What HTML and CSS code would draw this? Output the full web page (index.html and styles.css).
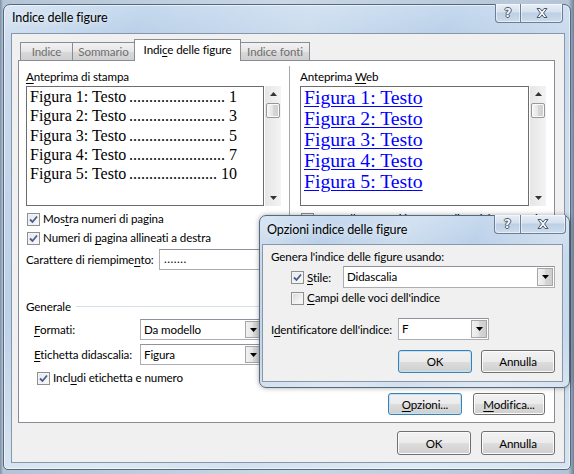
FILE: index.html
```html
<!DOCTYPE html>
<html lang="it">
<head>
<meta charset="utf-8">
<title>Indice delle figure</title>
<link rel="stylesheet" href="styles.css">
</head>
<body>
<div class="desktop">
  <div class="window main">
    <div class="titlebar">
      <span class="title">Indice delle figure</span>
      <div class="caps">
        <span class="cap help">?</span>
        <span class="cap close"><svg width="12" height="10" viewBox="0 0 12 10"><path d="M1 0.5h3l2 2.6 2-2.6h3l-3.4 4.5 3.4 4.5h-3l-2-2.6-2 2.6h-3l3.4-4.5z" fill="#f4f6f8" stroke="#4d5966" stroke-width="1"/></svg></span>
      </div>
    </div>
    <div class="client">
      <div class="tabs">
        <div class="tab t1">Indice</div>
        <div class="tab t2">Sommario</div>
        <div class="tab t3 active">Indi<u>c</u>e delle figure</div>
        <div class="tab t4">Indice fonti</div>
      </div>
      <div class="panel">
        <div class="previews">
          <div class="col colleft">
            <div class="lbl"><u>A</u>nteprima di stampa</div>
            <div class="pwrap">
              <div class="preview print">
                <div class="pline"><span class="pname">Figura 1: Testo</span><span class="leader">........................</span><span class="pnum">1</span></div>
                <div class="pline"><span class="pname">Figura 2: Testo</span><span class="leader">........................</span><span class="pnum">3</span></div>
                <div class="pline"><span class="pname">Figura 3: Testo</span><span class="leader">........................</span><span class="pnum">5</span></div>
                <div class="pline"><span class="pname">Figura 4: Testo</span><span class="leader">........................</span><span class="pnum">7</span></div>
                <div class="pline"><span class="pname">Figura 5: Testo</span><span class="leader">......................</span><span class="pnum">10</span></div>
              </div>
              <div class="vscroll">
                <svg class="arr" width="7" height="4" viewBox="0 0 7 4"><path d="M0 4L3.5 0 7 4z" fill="#333"/></svg>
                <div class="thumb"></div>
                <div class="spacer"></div>
                <svg class="arr" width="7" height="4" viewBox="0 0 7 4"><path d="M0 0L3.5 4 7 0z" fill="#333"/></svg>
              </div>
            </div>
            <div class="chk row1"><span class="box on"><svg width="11" height="11" viewBox="0 0 11 11"><path d="M2 5.5L4.5 8 9 2.5" fill="none" stroke="#4a5d8c" stroke-width="1.8"/></svg></span><span class="ctxt">Mos<u>t</u>ra numeri di pagina</span></div>
            <div class="chk row2"><span class="box on"><svg width="11" height="11" viewBox="0 0 11 11"><path d="M2 5.5L4.5 8 9 2.5" fill="none" stroke="#4a5d8c" stroke-width="1.8"/></svg></span><span class="ctxt">Numeri di <u>p</u>agina allineati a destra</span></div>
            <div class="fillrow"><span class="flab">Carattere di riempime<u>n</u>to:</span><div class="field">.......</div></div>
          </div>
          <div class="sep"></div>
          <div class="col colright">
            <div class="lbl">Anteprima <u>W</u>eb</div>
            <div class="pwrap">
              <div class="preview web">
                <div class="wline">Figura 1: Testo</div>
                <div class="wline">Figura 2: Testo</div>
                <div class="wline">Figura 3: Testo</div>
                <div class="wline">Figura 4: Testo</div>
                <div class="wline">Figura 5: Testo</div>
              </div>
              <div class="vscroll">
                <svg class="arr" width="7" height="4" viewBox="0 0 7 4"><path d="M0 4L3.5 0 7 4z" fill="#333"/></svg>
                <div class="thumb"></div>
                <div class="spacer"></div>
                <svg class="arr" width="7" height="4" viewBox="0 0 7 4"><path d="M0 0L3.5 4 7 0z" fill="#333"/></svg>
              </div>
            </div>
            <div class="chk row1"><span class="box on"><svg width="11" height="11" viewBox="0 0 11 11"><path d="M2 5.5L4.5 8 9 2.5" fill="none" stroke="#4a5d8c" stroke-width="1.8"/></svg></span><span class="ctxt"><u>U</u>sa collegamenti ipertestuali anziché numeri</span></div>
          </div>
        </div>
        <div class="group"><span>Generale</span><span class="gline"></span></div>
        <div class="formrow r1"><span class="glab"><u>F</u>ormati:</span><div class="combo wide"><span class="ctext">Da modello</span><span class="cbtn"><svg width="7" height="4" viewBox="0 0 7 4"><path d="M0 0L3.5 4 7 0z" fill="#000"/></svg></span></div></div>
        <div class="formrow r2"><span class="glab"><u>E</u>tichetta didascalia:</span><div class="combo wide"><span class="ctext">Figura</span><span class="cbtn"><svg width="7" height="4" viewBox="0 0 7 4"><path d="M0 0L3.5 4 7 0z" fill="#000"/></svg></span></div></div>
        <div class="chk incl"><span class="box on"><svg width="11" height="11" viewBox="0 0 11 11"><path d="M2 5.5L4.5 8 9 2.5" fill="none" stroke="#4a5d8c" stroke-width="1.8"/></svg></span><span class="ctxt">Incl<u>u</u>di etichetta e numero</span></div>
        <div class="pbuttons">
          <span class="btn focus opz"><span><u>O</u>pzioni...</span></span>
          <span class="btn mod"><span><u>M</u>odifica...</span></span>
        </div>
      </div>
      <div class="footer">
        <span class="btn big">OK</span>
        <span class="btn big">Annulla</span>
      </div>
    </div>
  </div>

  <div class="window dialog">
    <div class="titlebar">
      <span class="title">Opzioni indice delle figure</span>
      <div class="caps">
        <span class="cap help">?</span>
        <span class="cap close dclose"><svg width="12" height="10" viewBox="0 0 12 10"><path d="M1 0.5h3l2 2.6 2-2.6h3l-3.4 4.5 3.4 4.5h-3l-2-2.6-2 2.6h-3l3.4-4.5z" fill="#f4f6f8" stroke="#4d5966" stroke-width="1"/></svg></span>
      </div>
    </div>
    <div class="client dclient">
      <div class="dhead">Genera l'indice delle figure usando:</div>
      <div class="stilerow">
        <span class="box on"><svg width="11" height="11" viewBox="0 0 11 11"><path d="M2 5.5L4.5 8 9 2.5" fill="none" stroke="#4a5d8c" stroke-width="1.8"/></svg></span>
        <span class="slab"><u>S</u>tile:</span>
        <div class="combo stile"><span class="ctext">Didascalia</span><span class="cbtn"><svg width="7" height="4" viewBox="0 0 7 4"><path d="M0 0L3.5 4 7 0z" fill="#000"/></svg></span></div>
      </div>
      <div class="chk campi"><span class="box"></span><span class="ctxt"><u>C</u>ampi delle voci dell'indice</span></div>
      <div class="idrow">
        <span class="idlab">I<u>d</u>entificatore dell'indice:</span>
        <div class="combo idc"><span class="ctext">F</span><span class="cbtn"><svg width="7" height="4" viewBox="0 0 7 4"><path d="M0 0L3.5 4 7 0z" fill="#000"/></svg></span></div>
      </div>
      <div class="dbuttons">
        <span class="btn big focus">OK</span>
        <span class="btn big">Annulla</span>
      </div>
    </div>
  </div>
</div>
</body>
</html>
```

FILE: styles.css
```css
* { box-sizing: border-box; }
html, body { margin: 0; padding: 0; }
body {
  font-family: Lato, "Noto Sans", "Liberation Sans", sans-serif;
  font-size: 11.6px;
  letter-spacing: -0.12px;
  color: #000;
}
u { text-decoration: underline; text-underline-offset: 2px; }

.desktop {
  position: relative;
  width: 574px;
  height: 474px;
  overflow: hidden;
  padding-top: 4px;
  padding-left: 3px;
  background: linear-gradient(90deg, #7d8fa3 0, #b4c4d6 3px, #c9d7e6 50%, #b4c4d6 99%, #6f8196 100%);
}

/* Aero glass window frame */
.window {
  display: flex;
  flex-direction: column;
  border: 1px solid #56687d;
  border-radius: 7px 7px 5px 5px;
  background:
    linear-gradient(115deg, rgba(255,255,255,0.35) 0, rgba(255,255,255,0) 18%, rgba(255,255,255,0.25) 40%, rgba(255,255,255,0) 58%, rgba(255,255,255,0.3) 80%, rgba(255,255,255,0.1) 100%),
    linear-gradient(#c6d9ee, #b6cde6 40px, #bdd2e9 70%, #d3e1ef);
  box-shadow: inset 0 0 0 1px rgba(255,255,255,0.55);
}
.main {
  width: 568px;
  height: 466px;
}
.titlebar {
  display: flex;
  justify-content: space-between;
  align-items: flex-start;
  height: 28px;
  flex: none;
}
.title {
  padding: 4px 0 0 8px;
  line-height: 17px;
  font-size: 12.6px;
  color: #000;
  text-shadow: 0 0 6px rgba(255,255,255,0.9);
}
.caps {
  display: flex;
  margin-top: -1px;
  margin-right: 7px;
}
.cap {
  display: flex;
  align-items: center;
  justify-content: center;
  height: 19px;
  border: 1px solid #6d7e92;
  border-top: none;
  background: linear-gradient(#e8eff7, #d3e0ee 45%, #bccfe4 50%, #cddcec);
  box-shadow: inset 0 0 0 1px rgba(255,255,255,0.5);
}
.help {
  width: 26px;
  border-radius: 0 0 0 4px;
  font-family: "DejaVu Sans", sans-serif;
  font-weight: bold;
  font-size: 12px;
  letter-spacing: 0;
  color: #f7f8fa;
  text-shadow: 1px 0 0 #4d5966, -1px 0 0 #4d5966, 0 1px 0 #4d5966, 0 -1px 0 #4d5966;
}
.close {
  width: 42px;
  border-left: none;
  border-radius: 0 0 4px 0;
}

.client {
  flex: 1;
  margin: 0 5px 6px 7px;
  border: 1px solid #8796a8;
  background: #f0f0f0;
  padding: 5px 9px 7px 6px;
  display: flex;
  flex-direction: column;
}

/* tabs */
.tabs {
  display: flex;
  align-items: flex-end;
  height: 21px;
  padding-left: 2px;
  position: relative;
  z-index: 2;
}
.tab {
  height: 18px;
  border: 1px solid #898c95;
  border-bottom: none;
  background: linear-gradient(#f2f2f2, #e6e6e6 50%, #d9d9d9 50%, #d0d0d0);
  color: #6f6f6f;
  text-align: center;
  line-height: 17px;
  margin-left: -1px;
}
.t1 { width: 53px; margin-left: 0; }
.t2 { width: 63px; }
.t3 { width: 107px; }
.t4 { width: 70px; }
.tab.active {
  height: 22px;
  margin-bottom: -1px;
  background: #fff;
  color: #000;
  line-height: 20px;
  position: relative;
  z-index: 3;
}

.panel {
  height: 363px;
  border: 1px solid #898c95;
  background: #fff;
  position: relative;
  z-index: 1;
  overflow: hidden;
}

/* previews */
.previews {
  display: flex;
  padding: 9px 0 0 7px;
}
.col { display: flex; flex-direction: column; }
.colleft { width: 255px; }
.colright { width: 246px; overflow: hidden; }
.sep {
  width: 1px;
  background: #a8a8a8;
  margin: -4px 10px 0 8px;
}
.lbl { line-height: 14px; height: 14px; }
.pwrap {
  display: flex;
  margin-top: 2px;
  height: 120px;
}
.preview {
  border: 1px solid #6d6d6d;
  background: #fff;
  overflow: hidden;
  font-family: "Liberation Serif", "Times New Roman", serif;
  letter-spacing: 0;
}
.print {
  width: 238px;
  padding: 0 0 0 3px;
  font-size: 16px;
  line-height: 19.25px;
}
.pline {
  display: flex;
  justify-content: space-between;
  width: 207px;
  white-space: nowrap;
}
.pname, .pnum, .leader { flex: none; }
.leader {
  margin-left: auto;
  padding-right: 4px;
}
.web {
  width: 230px;
  padding-left: 3px;
  font-size: 19.7px;
  line-height: 21px;
}
.wline {
  color: #0000ff;
  text-decoration: underline;
  text-underline-offset: 2px;
  white-space: nowrap;
}
.vscroll {
  width: 16px;
  margin-left: 1px;
  background: linear-gradient(90deg, #e6e6e6, #f3f3f3);
  display: flex;
  flex-direction: column;
  align-items: center;
  padding: 6px 0 6px;
}
.arr { flex: none; }
.thumb {
  width: 14px;
  height: 15px;
  margin-top: 7px;
  border: 1px solid #979797;
  border-radius: 2px;
  background: linear-gradient(90deg, #f5f5f5, #e4e4e4 50%, #d6d6d6 51%, #cfcfcf);
  box-shadow: inset 0 0 0 1px #fafafa;
}
.spacer { flex: 1; }

/* checkboxes */
.chk {
  display: flex;
  align-items: center;
  height: 14px;
  line-height: 14px;
  white-space: nowrap;
}
.ctxt { white-space: nowrap; }
.box {
  flex: none;
  width: 13px;
  height: 13px;
  border: 1px solid #8e8f8f;
  background: linear-gradient(135deg, #d7d7d7, #f4f4f4 70%, #fbfbfb);
  box-shadow: inset 0 0 0 1px #f3f3f3;
  margin-right: 3px;
  display: flex;
  align-items: center;
  justify-content: center;
}
.box.on { background: linear-gradient(135deg, #e5e8ef, #f8f9fb); }
.colleft .chk .box, .colright .chk .box { margin-left: 1px; }
.row1 { margin-top: 6px; }
.row2 { margin-top: 5px; }

.fillrow {
  display: flex;
  align-items: center;
  margin-top: 4px;
}
.flab { width: 133px; white-space: nowrap; }
.field {
  width: 104px;
  height: 21px;
  border: 1px solid #abadb3;
  border-top-color: #8e929c;
  background: #fff;
  padding-left: 4px;
  line-height: 18px;
  letter-spacing: 0.5px;
}

/* Generale */
.group {
  display: flex;
  align-items: center;
  margin: 29px 9px 0 7px;
  height: 14px;
}
.gline {
  flex: 1;
  height: 1px;
  background: #d5dfe5;
  margin-left: 5px;
}
.formrow {
  display: flex;
  align-items: center;
  padding-left: 15px;
}
.r1 { margin-top: 6px; }
.r2 { margin-top: 4px; }
.glab { width: 106px; white-space: nowrap; }

.combo {
  display: flex;
  height: 21px;
  border: 1px solid #abadb3;
  border-top-color: #8e929c;
  background: #fff;
}
.combo .ctext {
  flex: 1;
  padding-left: 3px;
  line-height: 19px;
  white-space: nowrap;
}
.cbtn {
  width: 16px;
  margin: 1px;
  border: 1px solid #a6a6a6;
  background: linear-gradient(90deg, #f2f2f2, #e4e4e4 50%, #d7d7d7 51%, #cdcdcd);
  display: flex;
  align-items: center;
  justify-content: center;
}
.wide { width: 123px; }

.incl { margin-top: 6px; padding-left: 18px; }

.pbuttons {
  display: flex;
  justify-content: flex-end;
  gap: 11px;
  margin-top: 8px;
  padding-right: 9px;
}

/* buttons */
.btn {
  display: flex;
  align-items: center;
  justify-content: center;
  height: 22px;
  border: 1px solid #707070;
  border-radius: 3px;
  background: linear-gradient(#f2f2f2, #ebebeb 50%, #dddddd 51%, #cfcfcf);
  box-shadow: inset 0 0 0 1px #fbfbfb;
  white-space: nowrap;
}
.btn.focus {
  border-color: #3c7fb1;
  box-shadow: inset 0 0 0 1px #c2e2f5;
}
.opz { width: 74px; }
.mod { width: 72px; }
.big { width: 74px; height: 24px; }

.footer {
  display: flex;
  justify-content: flex-end;
  gap: 10px;
  margin-top: 8px;
}

/* options dialog (floating window) */
.dialog {
  position: absolute;
  left: 259px;
  top: 215px;
  width: 311px;
  height: 173px;
  border-radius: 7px;
  box-shadow: 0 0 5px rgba(0,0,0,0.35);
  z-index: 10;
}
.dialog .title { padding-left: 7px; padding-top: 5px; }
.dialog .caps { margin-right: 3px; }
.dialog .help { width: 27px; }
.dclose { width: 45px; }
.dclient {
  margin: 0 6px 5px 2px;
  padding: 5px 7px 8px 8px;
  display: block;
}
.dhead { line-height: 14px; height: 14px; }
.stilerow {
  display: flex;
  align-items: center;
  margin-top: 2px;
  padding-left: 20px;
}
.stilerow .box { margin-right: 3px; }
.slab { width: 36px; }
.stile { width: 212px; height: 22px; }
.campi { margin-top: 3px; padding-left: 20px; }
.idrow {
  display: flex;
  align-items: center;
  margin-top: 13px;
}
.idlab { width: 127px; white-space: nowrap; }
.idc { width: 91px; height: 22px; }
.dbuttons {
  display: flex;
  justify-content: flex-end;
  gap: 9px;
  margin-top: 10px;
}
.dbuttons .big { height: 23px; }
```
